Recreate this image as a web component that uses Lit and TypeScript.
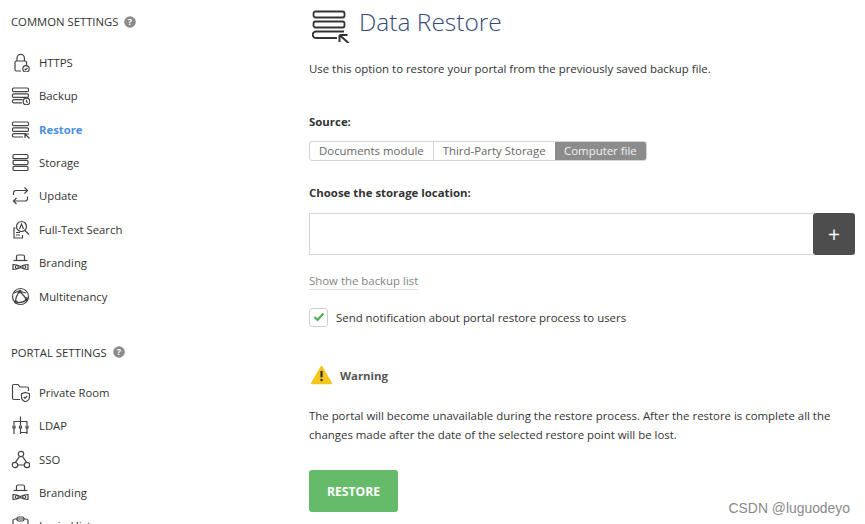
import { LitElement, html, css, svg } from "lit";
import { customElement } from "lit/decorators.js";

const stack = svg`<rect x="1.500" y="2" width="16" height="3.600" rx="1.200"/><rect x="1.500" y="7.800" width="16" height="3.600" rx="1.200"/>`;
const icons: Record<string, unknown> = {
  https: svg`<path d="M6 8V5a3.700 3.700 0 0 1 7.400 0v3"/><path d="M10 18H5.500A1.500 1.500 0 0 1 4 16.500V9.500A1.500 1.500 0 0 1 5.500 8h8.500a1.500 1.500 0 0 1 1.500 1.500V12"/><circle cx="15" cy="15.800" r="3.200"/><path d="M13.600 15.800l1 1 1.900-2"/>`,
  backup: svg`${stack}<path d="M11 16.800H3a1.500 1.500 0 0 1 0-3.200h8.500"/><circle cx="15.500" cy="15.500" r="3.300"/><path d="M15.500 13.800v1.900l1.200.8"/>`,
  restore: svg`${stack}<path d="M12 17H3a1.600 1.600 0 0 1 0-3.300h12"/><path d="M14 14v4M14 14h4M14 14l4.500 4.500"/>`,
  storage: svg`<rect x="2" y="1.500" width="15" height="4.200" rx="1.300"/><rect x="2" y="7.400" width="15" height="4.200" rx="1.300"/><rect x="2" y="13.300" width="15" height="4.200" rx="1.300"/>`,
  update: svg`<path d="M2.500 9V7a2.500 2.500 0 0 1 2.500-2.500h11.500M13.500 1.500l3 3-3 3"/><path d="M16.500 10.500v2a2.500 2.500 0 0 1-2.500 2.500H2.500M5.500 12l-3 3 3 3"/>`,
  search: svg`<circle cx="10.500" cy="6.500" r="5"/><path d="M14 10.500l4 4M8.500 9l2-5 2 5M4.500 8H3v10h8.500v-3"/><path d="M5 12.500h4M5 15h4"/>`,
  brand: svg`<path d="M5.500 7V3.500A1.500 1.500 0 0 1 7 2h5a1.500 1.500 0 0 1 1.500 1.500V7"/><path d="M2.500 7.500h14"/><path d="M2 11.500q4 0 7.500 2q3.500-2 7.500-2v5q-4 0-7.500-2q-3.500 2-7.500 2z"/><circle cx="5.800" cy="14" r="1.500"/><circle cx="13.200" cy="14" r="1.500"/>`,
  multi: svg`<circle cx="9.500" cy="9.500" r="8"/><path d="M3 6c2-1 4-2 6-1.500l6 1.500M4.500 15.500c0-4 1-8 4.500-11M9 4.500l7 8M5 15.500c4 .5 8-.5 11-3"/><circle cx="9" cy="4.500" r="1.200"/><circle cx="15.500" cy="12" r="1.200"/><circle cx="5" cy="15" r="1.200"/>`,
  room: svg`<path d="M9 16.500H3A1.500 1.500 0 0 1 1.500 15V3A1.500 1.500 0 0 1 3 1.500h4l2 2.500h7a1.500 1.500 0 0 1 1.500 1.500V8"/><path d="M14.500 9.500l4 1.300v3.200c0 2.500-2 4-4 4.800-2-.8-4-2.300-4-4.800v-3.200z"/><path d="M12.800 14l1.300 1.300 2.200-2.400"/>`,
  ldap: svg`<path d="M9.500 0.500v5M3 9V5.500h13V9M9.500 5.500V9M3 12v6M9.500 12v6M16 12v6M9.500 16.500h6.500"/><path d="M2 10h2v2H2zM8.500 10h2v2h-2zM15 10h2v2h-2z"/>`,
  sso: svg`<circle cx="10" cy="4" r="2.700"/><circle cx="4" cy="15" r="2.700"/><circle cx="16" cy="15" r="2.700"/><path d="M8.500 6.300L4.500 12.300M11.500 6.300l4 6M6.700 15h6.600"/>`,
  history: svg`<rect x="2" y="3" width="15" height="16" rx="2"/><rect x="6" y="1" width="7" height="4" rx="1.500"/><path d="M5 9h9M5 13h9"/>`,
};

const icon = (name: string) =>
  html`<svg class="ic" width="19" height="19" viewBox="0 0 19 19">${icons[name]}</svg>`;

const help = html`<svg class="help" width="12" height="12" viewBox="0 0 12 12"><circle cx="6" cy="6" r="5.800" fill="#8b8b8b"/><text x="6" y="9.200" text-anchor="middle" font-size="9" font-weight="700" font-family="Open Sans" fill="#fff">?</text></svg>`;

const common = [["https","HTTPS"],["backup","Backup"],["restore","Restore"],["storage","Storage"],["update","Update"],["search","Full-Text Search"],["brand","Branding"],["multi","Multitenancy"]];
const portal = [["room","Private Room"],["ldap","LDAP"],["sso","SSO"],["brand","Branding"],["history","Login History"]];

@customElement("app-root")
export class AppRoot extends LitElement {
  static styles = css`
    :host { display: flex; width: 865px; height: 524px; overflow: hidden; background: #fff; color: #333; font-family: "Open Sans", sans-serif; font-size: 11.420px; }
    .side { width: 309px; flex: none; padding: 13px 0 0 11px; box-sizing: border-box; }
    .head { height: 17px; display: flex; align-items: center; gap: 6px; font-size: 11.300px; line-height: 17px; color: #333; }
    .list { display: flex; flex-direction: column; margin: 15.500px 0 0 0; font-size: 11.300px; }
    .list.second { margin-top: 15px; }
    .group2 { margin-top: 30.500px; }
    .item { height: 33.450px; display: flex; align-items: center; gap: 9px; line-height: 17px; }
    .item.active { color: #4a90e2; font-weight: 700; }
    .ic { fill: none; stroke: #444; stroke-width: 1.200; flex: none; }
    .main { flex: 1; min-width: 0; display: flex; flex-direction: column; align-items: flex-start; padding-right: 10px; }
    .title { display: flex; gap: 9px; height: 46px; font-size: 24.500px; font-weight: 300; color: #334b77; line-height: 44px; }
    .title-ic { fill: none; stroke: #333; stroke-width: 1.800; margin: 10px 0 0 3px; flex: none; }
    .desc { margin: 14px 0 0; line-height: 17px; }
    .label { font-weight: 700; line-height: 17px; }
    .l1 { margin-top: 36px; }
    .seg { display: flex; margin-top: 11px; height: 20px; border: 1px solid #d4d4d4; border-radius: 3px; box-sizing: border-box; overflow: hidden; color: #666; line-height: 18px; }
    .seg span { padding: 0 9px; border-left: 1px solid #d4d4d4; }
    .seg span:first-child { border-left: 0; }
    .seg span.on { background: #8c8c8c; color: #f2f2f2; border-left: 0; padding: 0 9.500px; }
    .l2 { margin-top: 23px; }
    .input-row { display: flex; width: 100%; margin-top: 12px; height: 42px; }
    .input { flex: 1; border: 1px solid #d4d4d4; border-right: 0; box-sizing: border-box; background: #fff; }
    .plus { width: 42px; background: #4d4d4d; border-radius: 3px; color: #fff; display: flex; align-items: center; justify-content: center; font-size: 21px; font-weight: 400; }
    .link { margin-top: 18px; color: #848484; line-height: 16px; border-bottom: 1px solid #e0e0e0; }
    .check-row { display: flex; align-items: center; gap: 8px; margin-top: 17px; height: 20px; }
    .box { width: 19px; height: 19px; box-sizing: border-box; border: 1.500px solid #cfcfcf; border-radius: 3px; display: flex; align-items: center; justify-content: center; }
    .warn { display: flex; align-items: center; gap: 8px; margin-top: 37px; height: 22px; font-weight: 700; color: #555; }
    .warn-ic { margin-left: 2px; }
    .warn-text { margin: 20px 0 0; line-height: 19px; width: 540px; }
    .btn { margin-top: 26px; width: 89px; height: 42px; background: #66bb6a; border-radius: 3px; color: #fff; font-weight: 700; font-size: 12.200px; display: flex; align-items: center; justify-content: center; }
    .mark { position: absolute; right: 15px; bottom: 8px; font-family: "Liberation Sans", sans-serif; font-size: 13.900px; color: #8a8a8a; }
  `;

  render() {
    const row = (list: string[][]) => list.map(([i, t]) =>
      html`<div class="item ${t === "Restore" ? "active" : ""}">${icon(i)}<span>${t}</span></div>`);
    return html`
      <aside class="side">
        <div class="head">COMMON SETTINGS ${help}</div>
        <div class="list">${row(common)}</div>
        <div class="group2">
          <div class="head">PORTAL SETTINGS ${help}</div>
          <div class="list second">${row(portal)}</div>
        </div>
      </aside>
      <main class="main">
        <div class="title">
          <svg class="title-ic" width="38" height="33" viewBox="0 0 38 33">
            <rect x="1.500" y="1.500" width="31" height="6" rx="2"/><rect x="1.500" y="11.500" width="31" height="6" rx="2"/>
            <path d="M25 28H4a3 3 0 0 1 0-6.500h28"/><path d="M27.500 25v7M27.500 25h8M27.500 25l9 8" stroke-width="2"/>
          </svg>
          <span>Data Restore</span>
        </div>
        <p class="desc">Use this option to restore your portal from the previously saved backup file.</p>
        <div class="label l1">Source:</div>
        <div class="seg"><span>Documents module</span><span>Third-Party Storage</span><span class="on">Computer file</span></div>
        <div class="label l2">Choose the storage location:</div>
        <div class="input-row"><div class="input"></div><div class="plus">+</div></div>
        <div class="link">Show the backup list</div>
        <div class="check-row">
          <div class="box"><svg width="12" height="10" viewBox="0 0 12 10"><path d="M1.500 5l3 3 6-6.500" fill="none" stroke="#4caf50" stroke-width="2.200"/></svg></div>
          <span>Send notification about portal restore process to users</span>
        </div>
        <div class="warn">
          <svg class="warn-ic" width="21" height="20" viewBox="0 0 23 21"><path d="M11.500 1.500L22 19.500H1z" fill="#f5c518" stroke="#f5c518" stroke-width="2" stroke-linejoin="round"/><path d="M11.500 6v7" stroke="#333" stroke-width="2.400"/><circle cx="11.500" cy="16" r="1.400" fill="#333"/></svg>
          <span>Warning</span>
        </div>
        <p class="warn-text">The portal will become unavailable during the restore process. After the restore is complete all the changes made after the date of the selected restore point will be lost.</p>
        <div class="btn">RESTORE</div>
      </main>
      <div class="mark">CSDN @luguodeyo</div>
    `;
  }
}
